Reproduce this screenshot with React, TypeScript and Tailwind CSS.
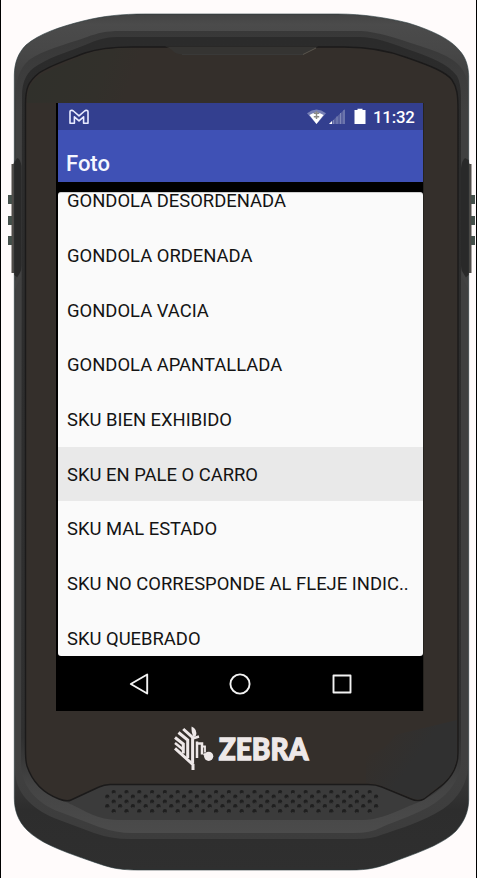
import React from "react";

const items = [
  "GONDOLA DESORDENADA",
  "GONDOLA ORDENADA",
  "GONDOLA VACIA",
  "GONDOLA APANTALLADA",
  "SKU BIEN EXHIBIDO",
  "SKU EN PALE O CARRO",
  "SKU MAL ESTADO",
  "SKU NO CORRESPONDE AL FLEJE INDIC..",
  "SKU QUEBRADO",
];

const holes: { x: number; y: number }[] = [];
for (let c = 0; c < 21; c++) {
  [792, 801.7, 811.2].forEach((y) => holes.push({ x: 113.7 + c * 12.8, y }));
}
for (let c = 0; c < 22; c++) {
  [796.7, 806.2].forEach((y) => holes.push({ x: 107.3 + c * 12.8, y }));
}

function DeviceBody() {
  return (
    <svg className="absolute inset-0" width="477" height="878" viewBox="0 0 477 878" aria-hidden="true">
      <defs>
        <linearGradient id="shell" x1="0" y1="14" x2="0" y2="870" gradientUnits="userSpaceOnUse">
          <stop offset="0" stopColor="#434343" />
          <stop offset="0.012" stopColor="#4b4b4b" />
          <stop offset="0.045" stopColor="#474747" />
          <stop offset="0.1" stopColor="#3b3b3b" />
          <stop offset="0.88" stopColor="#3b3b3b" />
          <stop offset="0.93" stopColor="#2d2d2d" />
          <stop offset="1" stopColor="#2f2f2f" />
        </linearGradient>
        <linearGradient id="rim" x1="0" y1="31" x2="0" y2="839" gradientUnits="userSpaceOnUse">
          <stop offset="0" stopColor="#383838" />
          <stop offset="0.1" stopColor="#404040" />
          <stop offset="0.9" stopColor="#404040" />
          <stop offset="1" stopColor="#3c3c3c" />
        </linearGradient>
        <linearGradient id="lip" x1="0" y1="37" x2="0" y2="833" gradientUnits="userSpaceOnUse">
          <stop offset="0" stopColor="#2b2b2b" />
          <stop offset="0.88" stopColor="#303030" />
          <stop offset="0.94" stopColor="#444444" />
          <stop offset="1" stopColor="#4b4b4b" />
        </linearGradient>
        <linearGradient id="glassTop" x1="40" y1="50" x2="145" y2="90" gradientUnits="userSpaceOnUse">
          <stop offset="0" stopColor="#30302b" />
          <stop offset="0.6" stopColor="#32302b" />
          <stop offset="0.85" stopColor="#342f2b" />
        </linearGradient>
        <linearGradient id="glassCorner" x1="365" y1="755" x2="400" y2="780" gradientUnits="userSpaceOnUse">
          <stop offset="0" stopColor="#303030" stopOpacity="0" />
          <stop offset="1" stopColor="#303030" />
        </linearGradient>
      </defs>

      <path d="M16 156 L13.5 164 L11.5 164 V273 H16Z M467 156 L469.5 164 H471.5 V273 H467Z" fill="#504c49" />
      <g fill="#45504b">
        <path d="M8 195h4v9H8zM8 216h4v9H8zM8 236h4v9H8zM471 195h4v9h-4zM471 216h4v9h-4zM471 236h4v9h-4z" />
      </g>

      <path
        d="M14.3 75 C14.5 63 18 53 26 45 C39 34 59 27 83 21 C103 16 122 14 145 14 H338 C363 14 388 18 408 23 C434 31 451 40 459 50 C466 57 468.5 67 468.7 76 V800 C468.5 812 464 822 456 831 C445 842 426 850 398 860 C378 868 369 870 350 870 H138 C116 870 108 867 88 860 C59 850 39 842 27 830 C18 821 14.3 810 14.3 798Z"
        fill="url(#shell)"
        stroke="#26383a"
        strokeWidth="0.6"
      />
      <path
        d="M16 96 C16 80 19 69 29 60 C43 50 64 45 87 37 C98 33 106 31 120 31 H361 C378 32 396 38 417 45 C442 53 461 60 466 77 Q468 87 468 100 V768 C467 783 458 799 443 809 C423 822 401 828 381 835 Q372 839 356 839 H130 Q111 839 94 833 L54 818 C29 807 16 792 15 771Z"
        fill="url(#rim)"
      />
      <path
        d="M22 96 C22 81 27 71 38 65 C54 55 74 50 90 43 C102 38 108 37 121 37 H360 C374 37 389 42 407 49 C431 57 448 64 457 76 Q461 83 461 98 V760 C461 777 451 792 435 803 C417 815 397 820 380 828 Q371 833 353 833 H133 Q116 833 99 827 L60 812 C37 804 22 786 21 766Z"
        fill="url(#lip)"
      />
      <path d="M25 755 C28 779 50 797 66 802 C86 811 98 820 118 820 H360 C379 820 390 814 414 804 C438 795 456 779 458 755 L420 740 L260 770 L80 740Z" fill="#3b3b3b" />
      <path
        d="M25.5 105 C25.5 88 28 82 39 73 C51 65 67 60 85 53 C97 49 111 47 132 47 H344 C370 47 390 51 408 58 C431 66 446 72 452 80 C457 87 458 95 458 110 V753 C458 769 449 781 436 790 L424 799 Q418 802 411 799 L382 787 Q376 784.5 368 784.5 H112 Q105 784 99 787 L71 800 Q67 802 59 799 C43 793 32 781 27 766 Q25.5 761 25.5 750Z"
        fill="#342f2b"
        stroke="#1b1a1a"
        strokeWidth="1.4"
      />
      <path d="M27 103 C27 88 31 81 42 74 L86 54 Q104 48 132 48 H165 L125 102Z" fill="url(#glassTop)" />
      <path d="M366 783 V755 Q385 752 395 735 L457 720 V753 C457 769 448 781 435 789 L424 798 Q418 801 412 798 L382 786 Q376 783 366 783Z" fill="url(#glassCorner)" />
      <path d="M165 46.5 H318 L303 54.5 H182 Q175 54 172 50 Q169 47 165 46.5Z" fill="#353432" />
      <path d="M182 54.5 H303" stroke="#393938" />
      <path d="M303 54.5 L316 48" stroke="#625e55" strokeWidth="0.8" />

      <path d="M14.3 163 L17 158 Q20 158 21.5 166 V266 Q21 274 18 278 L14.3 275Z" fill="#292929" />
      <path d="M468.7 160 L465 158 Q462 160 461 168 V266 Q462 274 465 278 L468.7 275Z" fill="#292929" />
      <path d="M15 281 L21 271 V277 L15 290Z M468 281 L462 271 V277 L468 290Z" fill="#424242" />

      {holes.map((h, i) => (
        <g key={i}>
          <circle cx={h.x} cy={h.y} r="2.1" fill="#1f1f1f" />
          <path d={`M${h.x - 1} ${h.y + 1.4}q1.3 .8 2.5 -.5`} stroke="#484848" strokeWidth="0.7" fill="none" />
        </g>
      ))}
    </svg>
  );
}

function StatusBar() {
  return (
    <div className="flex h-[27px] shrink-0 items-center bg-[#333f8f] pr-[9px] pl-[11px] text-white">
      <svg width="20" height="16" viewBox="0 0 20 16" fill="none" stroke="#e8ebff" strokeWidth="1.6" strokeLinejoin="round">
        <path d="M1 14.2 V3 Q1 1.2 2.9 1.3 L4.4 2 L10 6.8 L15.6 2 L17.1 1.3 Q19 1.2 19 3 V14.2 H14.6 V7.8 L10 11.8 L5.4 7.8 V14.2Z" />
      </svg>
      <svg className="ml-auto" width="60" height="18" viewBox="0 0 60 18">
        <path d="M0 5.2 Q9.5 -2.2 19 5.2 L9.5 16Z" fill="#7780b6" />
        <path d="M2.4 7 Q9.5 2 16.6 7 L9.5 16Z" fill="#fff" />
        <path d="M9.5 3 V11 M6.8 5.3 H12.2 M6.8 8.8 H12.2" stroke="#8c8c86" strokeWidth="1.5" fill="none" />
        <path d="M22 16 L38 1 V16Z" fill="#5962a0" />
        <path d="M26.5 12V16M30 8.5V16M33.5 5V16M37 2V16" stroke="#7f87b8" strokeWidth="1" />
        <path d="M22 16 L25 13 V16Z" fill="#fff" />
        <path d="M47.5 2 H50.5 V0.8 H55.5 V2 H58.5 V16 H47.5Z" fill="#fff" />
      </svg>
      <span className="ml-[6px] w-[41px] pt-px text-[16.8px] leading-5 font-medium tracking-[-0.2px]">11:32</span>
    </div>
  );
}

function NavBar() {
  return (
    <div className="flex h-[55px] shrink-0 items-center bg-black pl-[70px]">
      <svg width="226" height="26" viewBox="0 0 226 26" fill="none" stroke="#f2f2f2" strokeWidth="1.9" strokeLinejoin="round">
        <path d="M2.8 13 L19.2 3.5 V22.5Z" />
        <circle cx="112" cy="13" r="9.6" />
        <rect x="205.5" y="4.5" width="17" height="17" />
      </svg>
    </div>
  );
}

function ZebraLogo() {
  return (
    <div className="flex h-[46px] w-[138px] items-center">
      <svg width="40" height="46" viewBox="0 0 40 46" fill="none" stroke="#eee8e8" strokeWidth="3">
        <path d="M4.5 6.5 L13.7 14 V32" />
        <path d="M9.2 3 L18.6 11.5 V37" />
        <path d="M1 11.5 L9.3 18 V27.5" />
        <path d="M1 17 L9 23.4" strokeWidth="2.5" />
        <path d="M1 22.3 L19 38.6 V44" />
        <path d="M17.6 0.5 Q23.5 3 22 9.5 L19.5 11.5 Q17 5 17.6 0.5Z" fill="#eee8e8" stroke="none" />
        <path d="M18.6 12.5 L25 10.5" strokeWidth="2.4" />
        <path d="M23 32 V15.5" strokeWidth="2.5" />
        <path d="M22.5 17.5 H28 V28.5" strokeWidth="2.5" />
        <path d="M31 26.5 V20.5 H28" strokeWidth="1.8" />
        <circle cx="34.7" cy="30.3" r="4.6" fill="#eee8e8" stroke="none" />
        <path d="M29.5 28 L34 30" strokeWidth="2.4" />
      </svg>
      <svg width="98" height="46" viewBox="0 0 98 46" overflow="visible">
        <text
          x="4.8"
          y="34"
          textLength="89.5"
          lengthAdjust="spacingAndGlyphs"
          fill="#eee8e8"
          stroke="#eee8e8"
          strokeWidth="1.3"
          fontSize="30"
          className="font-['Lato',sans-serif] font-black"
        >
          ZEBRA
        </text>
      </svg>
    </div>
  );
}

export default function App() {
  return (
    <div className="relative flex h-[878px] w-[477px] flex-col items-center overflow-hidden border-x border-black bg-[#fffbfb] font-['Roboto',sans-serif]">
      <div className="absolute -left-px top-0">
        <div className="relative h-[878px] w-[477px]">
          <DeviceBody />
        </div>
      </div>
      <main className="relative mt-[103px] ml-[3px] flex h-[608px] w-[368px] flex-col border-r border-l-2 border-r-[#25231f] border-l-black bg-black">
        <StatusBar />
        <header className="flex h-[52px] shrink-0 items-center bg-[#3f51b5] pt-[16px] pl-[8px] text-[22px] leading-6 font-medium text-[#f5f7ff]">
          Foto
        </header>
        <div className="mt-[10px] h-[464px] shrink-0 overflow-hidden rounded-[3px] border-t border-[#cfcfcf] bg-[#fafafa]">
          <ul className="-mt-[19.9px]">
            {items.map((t) => (
              <li
                key={t}
                className={
                  "flex h-[54.7px] items-center pt-[1.4px] pl-[9px] text-[18.42px] leading-4 whitespace-nowrap text-[#141414] " +
                  (t === "SKU EN PALE O CARRO" ? "bg-[#e9e9e9]" : "")
                }
              >
                {t}
              </li>
            ))}
          </ul>
        </div>
        <NavBar />
      </main>
      <div className="relative mt-[15px] ml-[8px]">
        <ZebraLogo />
      </div>
    </div>
  );
}
